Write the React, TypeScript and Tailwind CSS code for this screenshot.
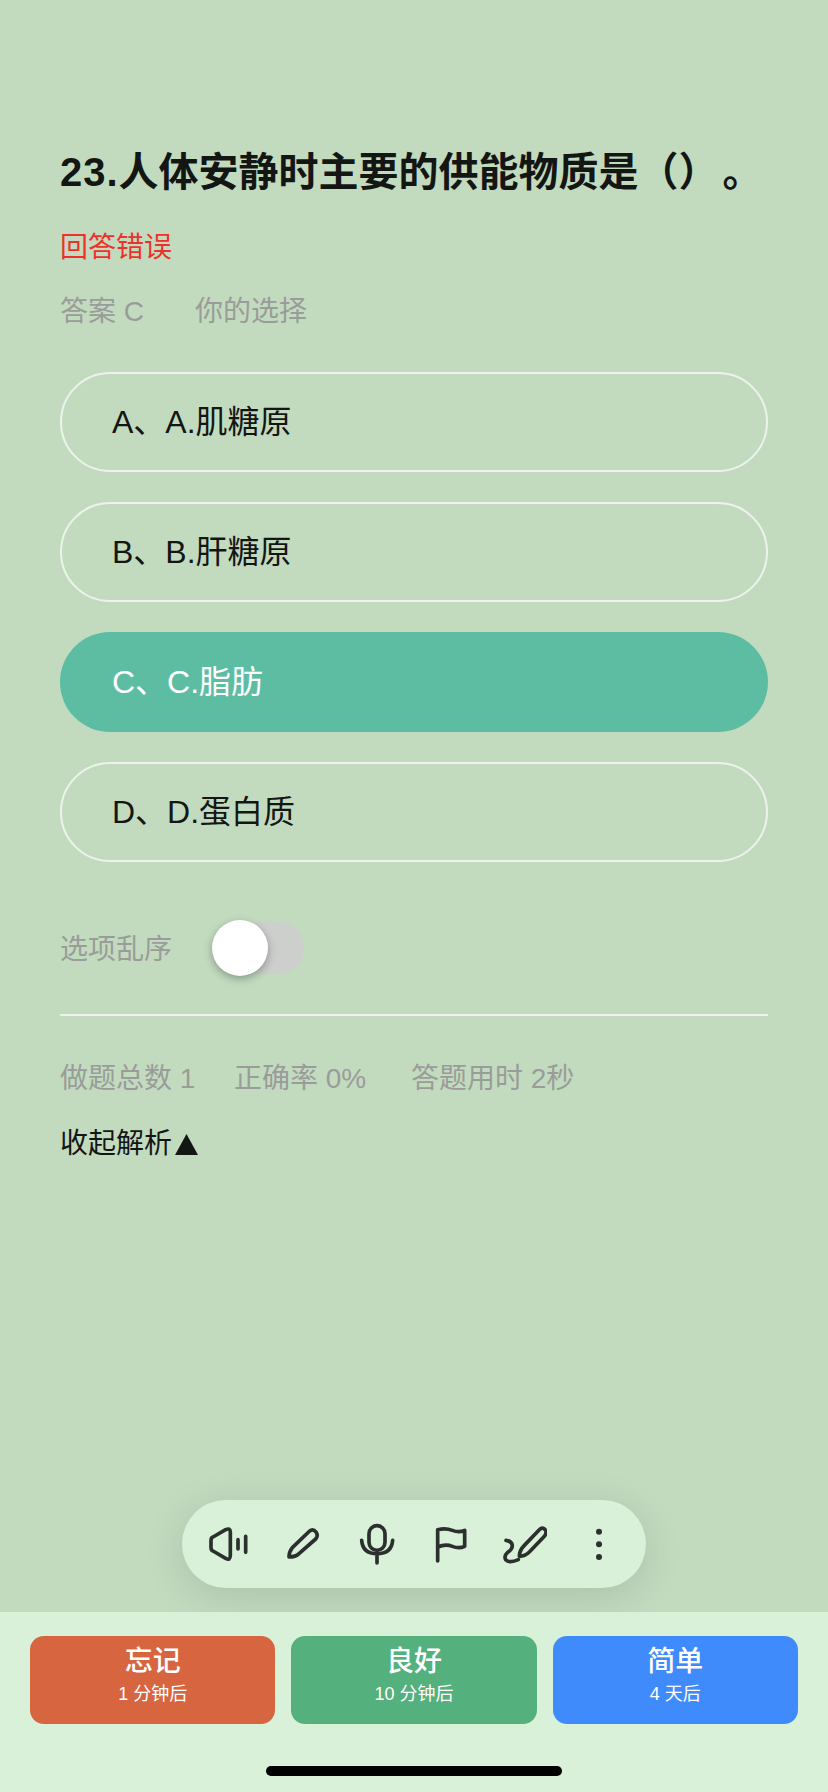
const options = [
  { label: 'A、A.肌糖原', active: false },
  { label: 'B、B.肝糖原', active: false },
  { label: 'C、C.脂肪', active: true },
  { label: 'D、D.蛋白质', active: false },
];

const grades = [
  { title: '忘记', sub: '1 分钟后', color: 'bg-[#d7653f]' },
  { title: '良好', sub: '10 分钟后', color: 'bg-[#54b07d]' },
  { title: '简单', sub: '4 天后', color: 'bg-[#3f8bfb]' },
];

const iconClass = 'w-[44px] h-[44px] shrink-0';
const strokeProps = {
  fill: 'none',
  stroke: '#2b2f2d',
  strokeWidth: 11,
  strokeLinecap: 'round' as const,
  strokeLinejoin: 'round' as const,
};

const Toolbar = () => {
  return (
    <div className="flex items-center gap-[30px] self-center w-[464px] h-[88px] px-[25px] mb-[24px] rounded-full bg-[#d9f0d9] shadow-[0_8px_40px_rgba(0,0,0,0.12)]">
      <svg viewBox="112 95 132 132" className={iconClass} {...strokeProps}>
        <path d="M130 140 L168 118 Q182 112 182 125 V195 Q182 212 168 204 L130 182 Q124 180 124 172 V150 Q124 142 130 140 Z" />
        <path d="M205 148 V176 M228 138 V186" />
      </svg>
      <svg viewBox="334 95 132 132" className={iconClass} {...strokeProps}>
        <path d="M358 200 Q358 185 368 172 L420 122 Q430 114 440 126 Q446 136 438 146 L388 190 Q378 200 358 200 Z" />
      </svg>
      <svg viewBox="555 95 132 132" className={iconClass} {...strokeProps}>
        <rect x="597" y="106" width="48" height="74" rx="24" />
        <path d="M575 150 Q578 190 621 190 Q665 190 668 150 M621 190 V218" />
      </svg>
      <svg viewBox="780 95 132 132" className={iconClass} {...strokeProps}>
        <path d="M806 212 V118 Q830 112 850 120 Q870 128 887 120 V168 Q870 176 850 168 Q830 160 806 170" />
      </svg>
      <svg viewBox="996 95 132 132" className={iconClass} {...strokeProps}>
        <path d="M1045 198 Q1045 180 1060 165 L1105 118 Q1115 108 1124 120 Q1128 130 1118 140 L1075 185 Q1062 198 1045 198 Z" />
        <path d="M1005 150 Q1022 152 1024 165 Q1024 178 1010 186 Q998 196 1004 208 Q1015 220 1042 208" />
      </svg>
      <svg viewBox="1223 95 132 132" className={iconClass} fill="#2b2f2d">
        <circle cx="1289" cy="124" r="9" />
        <circle cx="1289" cy="162" r="9" />
        <circle cx="1289" cy="200" r="9" />
      </svg>
    </div>
  );
};

const App = () => {
  return (
    <div className="flex flex-col w-[828px] h-[1792px] overflow-hidden bg-[#c2dbbf] [text-spacing-trim:space-all] font-['Liberation_Sans','Noto_Sans_CJK_SC',sans-serif]">
      <main className="flex flex-col flex-1 px-[60px] pt-[144px]">
        <h1 className="text-[40px] leading-[56px] font-semibold text-[#141614] whitespace-nowrap">
          <span className="tracking-[1px]">23.</span>人体安静时主要的供能物质是（<span className="tracking-[4px]">）</span>。
        </h1>
        <p className="mt-[28px] text-[28px] leading-[40px] text-[#f0302a]">回答错误</p>
        <div className="flex mt-[24px] gap-[51px] text-[28px] leading-[40px] text-[#9a9c9a]">
          <span>答案 C</span>
          <span>你的选择</span>
        </div>

        <div className="flex flex-col gap-[30px] mt-[40px]">
          {options.map((o) =>
            o.active ? (
              <div key={o.label} className="flex items-center h-[100px] px-[52px] rounded-full bg-[#5dbda2] text-white text-[32px]">
                {o.label}
              </div>
            ) : (
              <div key={o.label} className="flex items-center h-[100px] px-[50px] rounded-full border-2 border-[#edf3ec] text-[#141614] text-[32px]">
                {o.label}
              </div>
            ),
          )}
        </div>

        <div className="flex items-center h-[56px] mt-[58px]">
          <span className="text-[28px] leading-[40px] mt-[3px] text-[#9a9c9a]">选项乱序</span>
          <div className="relative w-[92px] h-[52px] ml-[40px] rounded-full bg-[#cdcfcd]">
            <div className="absolute left-0 top-[-2px] w-[56px] h-[56px] rounded-full bg-white shadow-[0_3px_8px_rgba(0,0,0,0.3)]" />
          </div>
        </div>

        <div className="h-[2px] mt-[38px] bg-[#edf3ec]" />

        <div className="flex mt-[43px] text-[28px] leading-[40px] text-[#9a9c9a]">
          <span className="w-[174px]">做题总数 1</span>
          <span className="w-[177px]">正确率 0%</span>
          <span>答题用时 2秒</span>
        </div>

        <div className="flex items-center mt-[25px] text-[28px] leading-[40px] text-[#141614]">
          <span>收起解析</span>
          <svg viewBox="0 0 23 21" className="w-[23px] h-[21px] ml-[3px]" fill="#141614">
            <path d="M11.5 0 L23 21 H0 Z" />
          </svg>
        </div>

        <div className="flex-1" />
        <Toolbar />
      </main>

      <footer className="relative flex flex-col h-[180px] px-[30px] pt-[24px] bg-[#d9f0d9]">
        <div className="flex gap-[16px]">
          {grades.map((g) => (
            <div key={g.title} className={`flex flex-col items-center flex-1 h-[88px] pt-[8px] rounded-[14px] text-white ${g.color}`}>
              <span className="text-[28px] leading-[36px] font-medium">{g.title}</span>
              <span className="text-[18px] leading-[26px] mt-[1px]">{g.sub}</span>
            </div>
          ))}
        </div>
        <div className="self-center w-[296px] h-[10px] mt-[42px] rounded-full bg-black" />
      </footer>
    </div>
  );
};

export default App;
